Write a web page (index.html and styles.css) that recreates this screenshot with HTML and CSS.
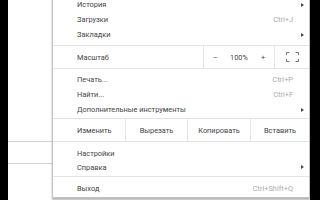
FILE: index.html
```html
<!DOCTYPE html>
<html lang="ru">
<head>
<meta charset="utf-8">
<link rel="stylesheet" href="styles.css">
</head>
<body>
<div class="screen">
  <div class="bar bar-left"></div>
  <div class="page">
    <div class="page-lines">
      <div class="hline"></div>
      <div class="hline second"></div>
    </div>
    <div class="menu">
      <div class="group g1">
        <div class="item"><span class="label">История</span><span class="sc"></span><span class="arr"><i class="tri"></i></span></div>
        <div class="item"><span class="label">Загрузки</span><span class="sc">Ctrl+J</span><span class="arr"></span></div>
        <div class="item"><span class="label">Закладки</span><span class="sc"></span><span class="arr"><i class="tri"></i></span></div>
      </div>
      <div class="sep s1"></div>
      <div class="zoomrow">
        <span class="rowlabel">Масштаб</span>
        <div class="zoomctl">
          <span class="zbtn">−</span>
          <span class="zval">100%</span>
          <span class="zbtn">+</span>
        </div>
        <div class="fullscr">
          <svg width="13" height="10" viewBox="0 0 13 10"><path d="M0.5 3V0.5H3.5M9.5 0.5H12.5V3M12.5 7V9.5H9.5M3.5 9.5H0.5V7" fill="none" stroke="#777" stroke-width="1"/></svg>
        </div>
      </div>
      <div class="sep s2"></div>
      <div class="group g2">
        <div class="item"><span class="label">Печать...</span><span class="sc">Ctrl+P</span><span class="arr"></span></div>
        <div class="item"><span class="label">Найти...</span><span class="sc">Ctrl+F</span><span class="arr"></span></div>
        <div class="item"><span class="label">Дополнительные инструменты</span><span class="sc"></span><span class="arr"><i class="tri"></i></span></div>
      </div>
      <div class="sep s3"></div>
      <div class="editrow">
        <span class="rowlabel">Изменить</span>
        <span class="ebtn b1">Вырезать</span>
        <span class="ebtn b2">Копировать</span>
        <span class="ebtn b3">Вставить</span>
      </div>
      <div class="sep s4"></div>
      <div class="group g3">
        <div class="item small"><span class="label">Настройки</span><span class="sc"></span><span class="arr"></span></div>
        <div class="item small"><span class="label">Справка</span><span class="sc"></span><span class="arr"><i class="tri"></i></span></div>
      </div>
      <div class="sep s5"></div>
      <div class="group g4">
        <div class="item small"><span class="label">Выход</span><span class="sc">Ctrl+Shift+Q</span><span class="arr"></span></div>
      </div>
    </div>
  </div>
  <div class="bar bar-right"></div>
</div>
</body>
</html>
```
FILE: styles.css
```css
* { box-sizing: border-box; }
html, body { margin: 0; padding: 0; }
body {
  width: 320px;
  height: 200px;
  overflow: hidden;
  background: #fff;
  font-family: Roboto, "Noto Sans", sans-serif;
  font-size: 7.4px;
  color: #454545;
}
.screen { display: flex; width: 320px; height: 200px; }
.bar { background: #000; height: 200px; }
.bar-left { width: 8px; }
.bar-right { width: 10px; }
.page { position: relative; width: 302px; height: 200px; background: #fff; }
.page-lines { padding-top: 141px; }
.hline { height: 1px; background: #d4d4d4; width: 100%; }
.hline.second { margin-top: 21px; }

.menu {
  position: absolute;
  left: 44px;
  top: -3px;
  width: 258px;
  background: #fff;
  border: 1px solid #c4c4c4;
  border-top: none;
  box-shadow: 0 2px 2px rgba(0,0,0,0.3);
  padding-bottom: 2px;
}
.item {
  display: flex;
  align-items: center;
  height: 15px;
  padding: 0 4px 0 24px;
  white-space: nowrap;
}
.item.small { height: 14px; }
.label { flex: 1; }
.sc { color: #aaa; }
.arr { width: 12px; display: flex; justify-content: flex-end; }
.tri {
  display: block;
  width: 0; height: 0;
  border-top: 2.5px solid transparent;
  border-bottom: 2.5px solid transparent;
  border-left: 3px solid #4a4a4a;
  margin-right: 1px;
}
.sep { height: 1px; background: #e4e4e4; }
.s1 { margin-top: 3px; }
.g2 { padding-top: 3px; }
.s3 { margin-top: 1px; }
.g3 { padding-top: 4px; }
.s5 { margin-top: 2px; margin-bottom: 4px; }

.zoomrow, .editrow {
  display: flex;
  align-items: stretch;
  height: 22px;
}
.rowlabel {
  display: flex;
  align-items: center;
  padding-left: 24px;
}
.zoomrow .rowlabel { width: 150px; }
.zoomctl {
  display: flex;
  align-items: center;
  width: 72px;
  border-left: 1px solid #e4e4e4;
  border-right: 1px solid #e4e4e4;
}
.zbtn { width: 22px; text-align: center; }
.zval { flex: 1; text-align: center; }
.fullscr {
  flex: 1;
  display: flex;
  align-items: center;
  justify-content: center;
}
.editrow .rowlabel { width: 72px; }
.ebtn {
  display: flex;
  align-items: center;
  justify-content: center;
  border-left: 1px solid #e4e4e4;
}
.b1 { width: 62px; }
.b2 { width: 63px; }
.b3 { flex: 1; }
```
